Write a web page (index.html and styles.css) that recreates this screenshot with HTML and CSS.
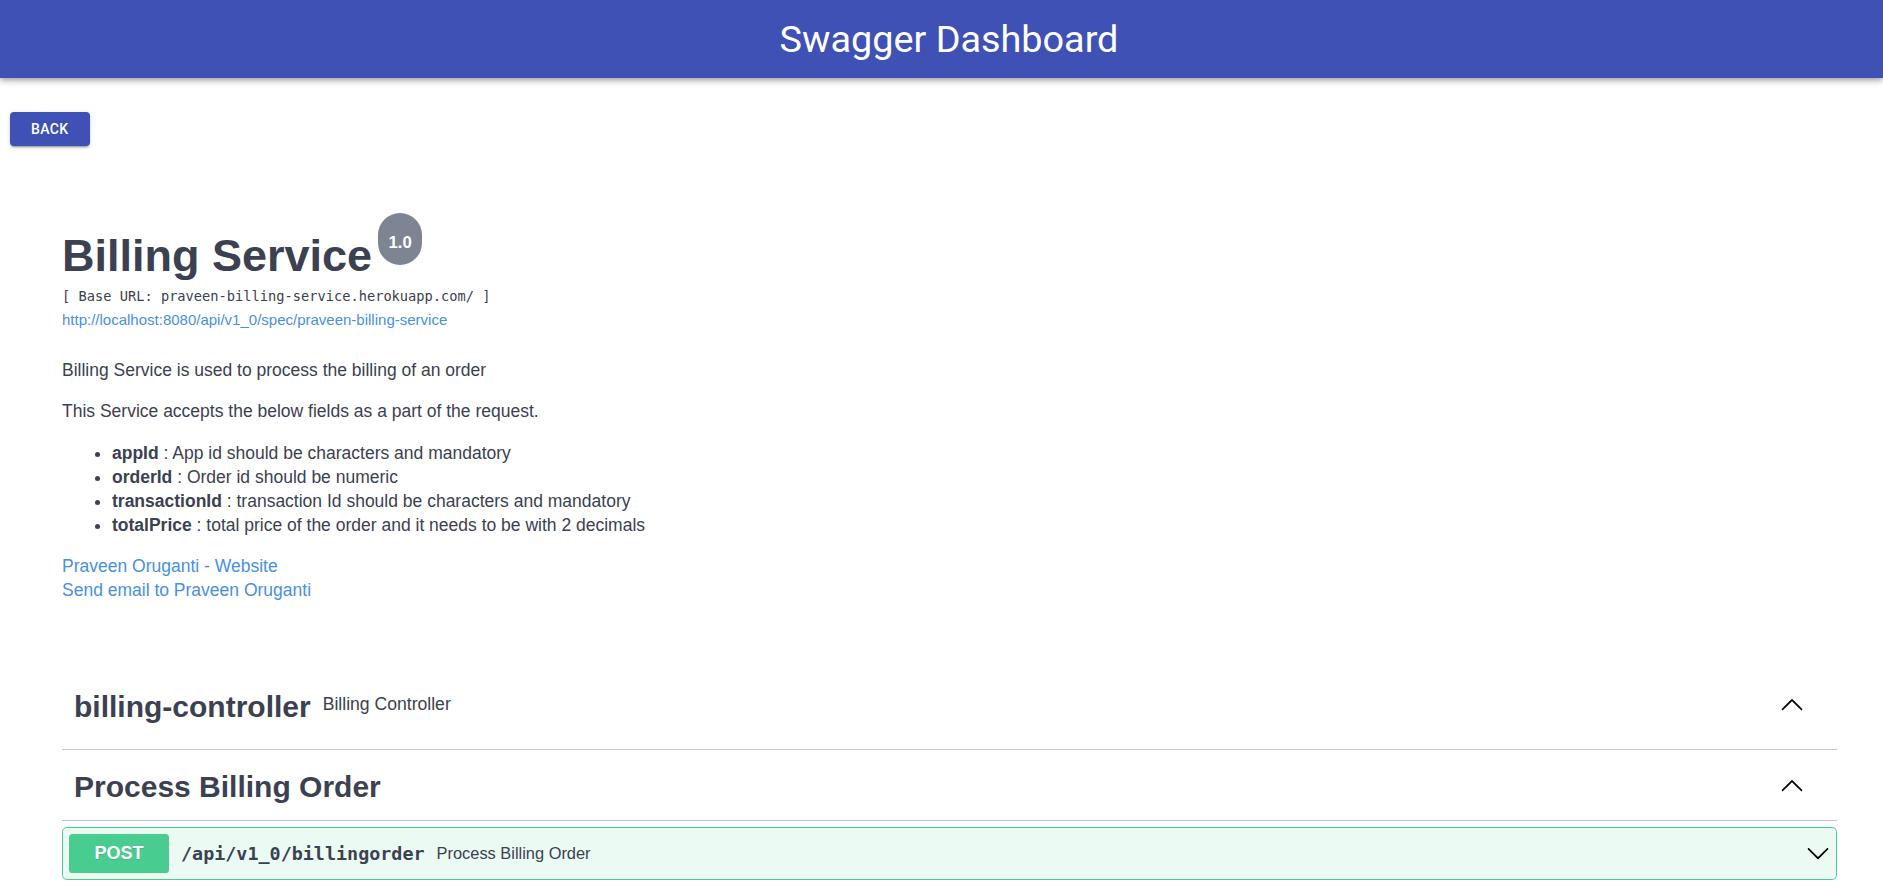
FILE: index.html
```html
<!DOCTYPE html>
<html lang="en">
<head>
<meta charset="utf-8">
<title>Swagger Dashboard</title>
<link rel="stylesheet" href="styles.css">
</head>
<body>
<header class="appbar">
  <h1 class="appbar-title">Swagger Dashboard</h1>
</header>
<main class="page">
  <div class="toolbar-row">
    <button class="back-btn" type="button">Back</button>
  </div>
  <div class="swagger">
    <section class="info">
      <h2 class="title"><span class="title-text">Billing Service</span><span class="version">1.0</span></h2>
      <div class="base-url">[ Base URL: praveen-billing-service.herokuapp.com/ ]</div>
      <a class="spec-url" href="#">http://localhost:8080/api/v1_0/spec/praveen-billing-service</a>
      <div class="description">
        <p>Billing Service is used to process the billing of an order</p>
        <p>This Service accepts the below fields as a part of the request.</p>
        <ul>
          <li><strong>appId</strong> : App id should be characters and mandatory</li>
          <li><strong>orderId</strong> : Order id should be numeric</li>
          <li><strong>transactionId</strong> : transaction Id should be characters and mandatory</li>
          <li><strong>totalPrice</strong> : total price of the order and it needs to be with 2 decimals</li>
        </ul>
      </div>
      <div class="contact">
        <a href="#">Praveen Oruganti - Website</a>
        <a href="#">Send email to Praveen Oruganti</a>
      </div>
    </section>

    <section class="tags">
      <div class="tag-row tag-row-first">
        <span class="tag-name">billing-controller</span>
        <span class="tag-desc">Billing Controller</span>
        <svg class="arrow" width="24" height="24" viewBox="0 0 20 20" aria-hidden="true"><path d="M17.418 14.908c.272.268.709.268.979 0s.271-.701 0-.969l-7.908-7.83c-.27-.268-.707-.268-.979 0l-7.908 7.83c-.27.268-.27.701 0 .969.271.268.709.268.979 0L10 7.767l7.418 7.141z"/></svg>
      </div>
      <div class="tag-row tag-row-second">
        <span class="tag-name tag-name-grow">Process Billing Order</span>
        <svg class="arrow" width="24" height="24" viewBox="0 0 20 20" aria-hidden="true"><path d="M17.418 14.908c.272.268.709.268.979 0s.271-.701 0-.969l-7.908-7.83c-.27-.268-.707-.268-.979 0l-7.908 7.83c-.27.268-.27.701 0 .969.271.268.709.268.979 0L10 7.767l7.418 7.141z"/></svg>
      </div>
      <div class="opblock">
        <div class="opblock-summary">
          <span class="method">POST</span>
          <span class="path">/api/v1_0/billingorder</span>
          <span class="op-desc">Process Billing Order</span>
          <svg class="arrow" width="24" height="24" viewBox="0 0 20 20" aria-hidden="true"><path d="M17.418 6.109c.272-.268.709-.268.979 0s.271.701 0 .969l-7.908 7.83c-.27.268-.707.268-.979 0l-7.908-7.830c-.27-.268-.27-.701 0-.969.271-.268.709-.268.979 0L10 13.25l7.418-7.141z"/></svg>
        </div>
      </div>
    </section>
  </div>
</main>
</body>
</html>
```
FILE: styles.css
```css
html, body {
  margin: 0;
  padding: 0;
  background: #ffffff;
}

body {
  font-family: "Liberation Sans", Arial, sans-serif;
  color: #3b4151;
}

.appbar {
  height: 78px;
  box-sizing: border-box;
  padding-left: 15px;
  display: flex;
  align-items: center;
  justify-content: center;
  background: #3f51b5;
  box-shadow: 0 2px 4px -1px rgba(0,0,0,0.2), 0 4px 5px 0 rgba(0,0,0,0.14), 0 1px 10px 0 rgba(0,0,0,0.12);
  position: relative;
  z-index: 1;
}

.appbar-title {
  margin: 0;
  font-family: Roboto, "Liberation Sans", sans-serif;
  font-weight: 400;
  font-size: 37.8px;
  color: #ffffff;
  line-height: normal;
}

.toolbar-row {
  padding: 34px 0 0 10px;
}

.back-btn {
  display: block;
  background: #3f51b5;
  color: #ffffff;
  border: 0;
  border-radius: 4px;
  padding: 6px 21px;
  font-family: Roboto, "Liberation Sans", sans-serif;
  font-weight: 500;
  font-size: 14px;
  line-height: 22px;
  letter-spacing: 0.4px;
  text-transform: uppercase;
  box-shadow: 0 3px 1px -2px rgba(0,0,0,0.2), 0 2px 2px 0 rgba(0,0,0,0.14), 0 1px 5px 0 rgba(0,0,0,0.12);
  cursor: pointer;
}

.swagger {
  margin: 0 46px 0 62px;
}

.title {
  display: flex;
  align-items: flex-end;
  margin: 67px 0 0;
  font-size: 45px;
  font-weight: 700;
  line-height: 44px;
  color: #3b4151;
}

.version {
  margin: 0 0 12.7px 6px;
  width: 44px;
  height: 52px;
  box-sizing: border-box;
  padding-top: 20px;
  border-radius: 57px;
  background: #7d8492;
  color: #ffffff;
  font-size: 16.8px;
  line-height: 19px;
  text-align: center;
  font-weight: 700;
}

.base-url {
  margin-top: 10px;
  font-family: "DejaVu Sans Mono", "Liberation Mono", monospace;
  font-size: 13.7px;
  line-height: 17px;
  color: #3b4151;
}

.spec-url {
  display: block;
  margin-top: 6px;
  font-size: 15px;
  line-height: 18px;
  color: #4990e2;
  text-decoration: none;
}

.description {
  margin-top: 29.2px;
  font-size: 17.5px;
  line-height: 24px;
}

.description p {
  margin: 0 0 17.5px;
}

.description ul {
  margin: 0 0 17.5px;
  padding-left: 50px;
}

.description strong {
  font-weight: 700;
}

.contact a {
  display: block;
  font-size: 17.5px;
  line-height: 24px;
  color: #4990e2;
  text-decoration: none;
}

.tags {
  margin-top: 57px;
}

.tag-row {
  display: flex;
  align-items: center;
  box-sizing: border-box;
  padding: 0 32.7px 0 12px;
  border-bottom: 1px solid rgba(59,65,81,0.3);
}

.tag-row-first {
  height: 90.6px;
}

.tag-row-second {
  height: 71px;
}

.tag-name {
  font-size: 30px;
  font-weight: 700;
  line-height: 1;
  padding-top: 5px;
  color: #3b4151;
}

.tag-name-grow {
  flex: 1;
}

.tag-desc {
  flex: 1;
  padding: 0 12px;
  font-size: 17.6px;
  color: #3b4151;
}

.arrow {
  display: block;
  flex: none;
  fill: #000000;
}

.opblock {
  margin-top: 6px;
  border: 1px solid #49cc90;
  border-radius: 4.8px;
  background: rgba(73,204,144,0.1);
}

.opblock-summary {
  display: flex;
  align-items: center;
  padding: 6px;
}

.method {
  width: 100px;
  height: 39px;
  border-radius: 3.6px;
  background: #49cc90;
  color: #ffffff;
  font-size: 18px;
  font-weight: 700;
  line-height: 39px;
  text-align: center;
  text-shadow: 0 1px 0 rgba(0,0,0,0.1);
}

.path {
  padding: 0 12px;
  font-family: "DejaVu Sans Mono", "Liberation Mono", monospace;
  font-size: 18.4px;
  font-weight: 700;
  color: #3b4151;
}

.op-desc {
  flex: 1;
  font-size: 16.4px;
  color: #3b4151;
}
```
